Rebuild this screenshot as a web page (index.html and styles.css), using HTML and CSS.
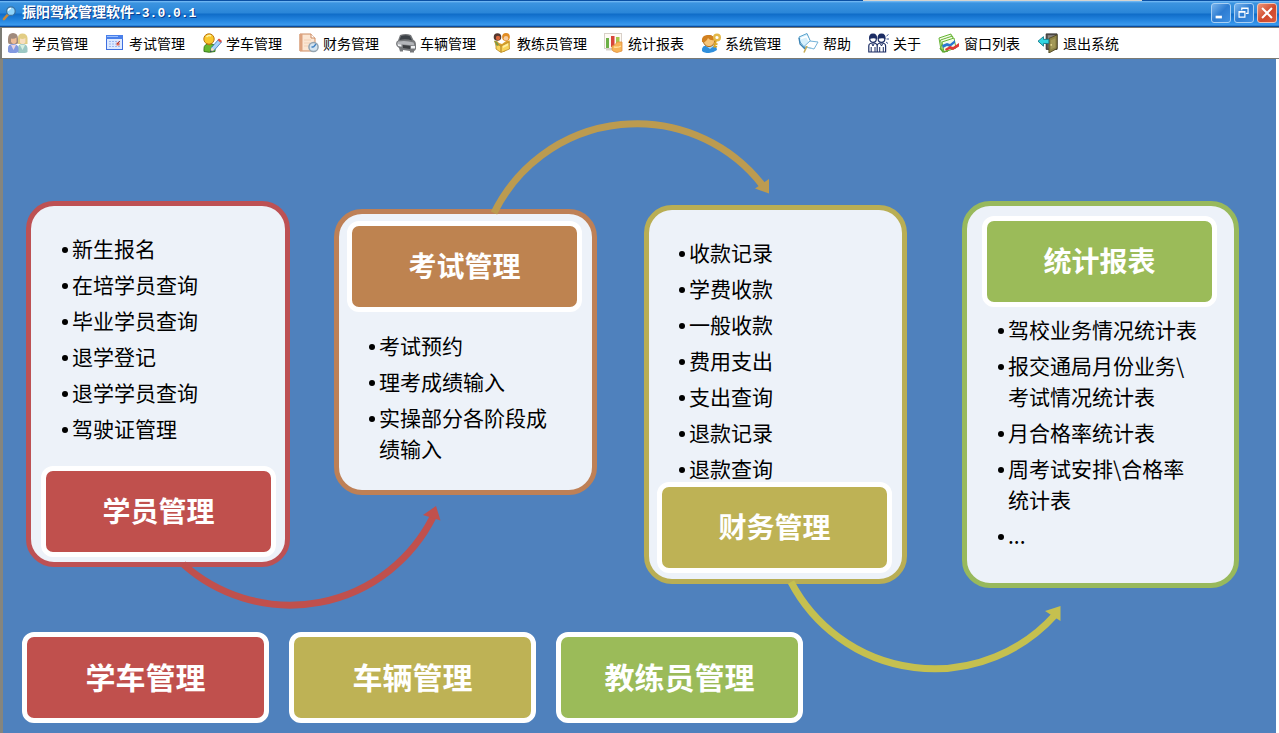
FILE: index.html
```html
<!DOCTYPE html>
<html lang="zh-CN">
<head>
<meta charset="utf-8">
<title>振阳驾校管理软件-3.0.0.1</title>
<link rel="stylesheet" href="styles.css">
</head>
<body>
<header class="titlebar">
  <svg class="app-icon" viewBox="0 0 16 16" aria-hidden="true">
    <path d="M2 14.500L7 9" stroke="#c98a3c" stroke-width="2.600" stroke-linecap="round"/>
    <circle cx="9.500" cy="6" r="4.600" fill="#8fd4fa" stroke="#3a6f9e" stroke-width="1.300"/>
    <path d="M6.700 5.500a3 3 0 0 1 3-2.500" stroke="#fff" stroke-width="1.400" fill="none"/>
  </svg>
  <h1 class="title">振阳驾校管理软件<span class="version">-3.0.0.1</span></h1>
  <div class="window-controls">
    <button class="control" aria-label="最小化"><svg viewBox="0 0 20 20"><path d="M4 13h7v3H4z" fill="#fff"/></svg></button>
    <button class="control" aria-label="还原"><svg viewBox="0 0 20 20"><path d="M7.500 7V4.500h7v6H12M7 5h8" fill="none" stroke="#fff" stroke-width="1.300"/><path d="M4.500 8.500h6.500v6H4.500zM4 9h7.500" fill="none" stroke="#fff" stroke-width="1.300"/></svg></button>
    <button class="control control-close" aria-label="关闭"><svg viewBox="0 0 20 20"><path d="M4.500 4.500l11 11M15.500 4.500l-11 11" stroke="#fff" stroke-width="2.200"/></svg></button>
  </div>
</header>

<nav class="menubar">
  <button class="menu-item"><svg class="icon" viewBox="0 0 20 20">
    <path d="M10 20v-5q0-4 4.500-4t5 4v4q-1 1-3 1z" fill="#9cc8c4"/><path d="M12 12l2.500 5 2.500-5z" fill="#d8f0e0"/>
    <path d="M10 5q0-4.500 4.500-4.500T19.500 5v6h-9.500z" fill="#e2cd84"/><path d="M12 5.500q3 1 5.400-.5v4.500q-2.700 3.500-5.400 0z" fill="#f8dfc0"/>
    <path d="M0 19v-4q0-4 5-4t5.500 4v4q-2 1-3 1H2z" fill="#8299e0"/><path d="M3 12l2.500 5L8 12z" fill="#e8d4e0"/>
    <path d="M0 6Q0 0 5 0t5 6v4q0 1-1.500 1h-7Q0 11 0 9z" fill="#a08a7c"/><path d="M3 5.500Q6 6.500 8.500 4.500V9q-2.500 4-5.500 0z" fill="#eebc96"/>
  </svg>学员管理</button>
  <button class="menu-item"><svg class="icon" viewBox="0 0 20 20">
    <rect x="1.500" y="2.500" width="16" height="14" fill="#dce9ff" stroke="#3f6fe0"/><path d="M1 2h17v4H1z" fill="#4a80ea"/><path d="M2 3h11v1H2z" fill="#9cc2ff"/>
    <path d="M4 8.500h11M4 11h11M4 13.500h11" stroke="#9db8f0" stroke-dasharray="2 1"/><path d="M11.500 9.500h3v3h-3z" fill="#e56c58"/><path d="M15 8l-3 3" stroke="#b03c38"/>
  </svg>考试管理</button>
  <button class="menu-item"><svg class="icon" viewBox="0 0 20 20">
    <path d="M2 18.500v-3Q2 11 7 11h3q3 0 3 4v3.500q-6 1.500-11 0z" fill="#65b82e" stroke="#397b1d"/>
    <circle cx="7" cy="6" r="5.200" fill="#f9c72c" stroke="#bd7812"/><path d="M5 11q2 2 5-.5" stroke="#bd7812" fill="none"/><path d="M4.500 4q2-2.500 4.500-1" stroke="#fff4a5" stroke-width="1.500" fill="none"/>
    <path d="M8.500 18.500l1-4 7-8 3 2.500-7 8z" fill="#a8d4fa" stroke="#3471b6" stroke-width=".8"/><path d="M15.500 7l1.500-1.500 3 2.500-1.500 1.800z" fill="#e04d3e"/><path d="M8.500 18.500l1-4 3 2.600z" fill="#fae2b8"/><path d="M8 19l.8-1.800 1.200 1z" fill="#222"/>
  </svg>学车管理</button>
  <button class="menu-item"><svg class="icon" viewBox="0 0 20 20">
    <path d="M1 1h11l4 4v13H1z" fill="#fbe6d3" stroke="#cd8b60"/><path d="M.500 1h3v17h-3z" fill="#dda27e"/><path d="M12 1v4h4" fill="#fff" stroke="#cd8b60"/><path d="M5 7h7M5 10h6M5 13h4" stroke="#f0cfb4"/>
    <circle cx="14.500" cy="14" r="4.600" fill="#d4e4f0" stroke="#94a4b0" stroke-width="1.500"/><path d="M14.500 14l2.500-3M14.500 14h-2" stroke="#3f81c2" stroke-width="1.300"/>
  </svg>财务管理</button>
  <button class="menu-item"><svg class="icon" viewBox="0 0 20 20">
    <path d="M2 7.500L4 2q6-2 11 0l2.500 5q2.500 1 2.500 5v4q-1 2-2 2v1.500h-4V18l-7-1v1.500H4L3 15q-3-2-3-4 0-3 2-3.500z" fill="#75777a"/>
    <path d="M5 3q5-1.500 9 .2L16 7.500Q10 5.500 3.500 7z" fill="#3c4147"/><path d="M2 8.500q8-1.500 15.500 1l1 3L1 11z" fill="#b4b6ba"/><path d="M7 12l7 1v3l-7-1z" fill="#3c3e41"/><path d="M1.500 11l4 .5v2.300l-3.500-.8zM15 13h4v2.500h-4z" fill="#eef0f2"/>
  </svg>车辆管理</button>
  <button class="menu-item"><svg class="icon" viewBox="0 0 20 20">
    <circle cx="4.500" cy="4" r="3.800" fill="#54382f"/><circle cx="5" cy="5" r="2.200" fill="#d9653a"/><circle cx="13" cy="4" r="3.900" fill="#e28d23"/><circle cx="13" cy="5.200" r="2.300" fill="#f6cda0"/>
    <path d="M1 8q3-1 5 2l3 1 4-3 4-.5-1 7-5 4.500-7-3z" fill="#dca22c"/><path d="M3 11l5 2 8-4 .5 7L8 19.500 3 16z" fill="#f9d45a" stroke="#b98822" stroke-width=".8"/><path d="M8 13v6" stroke="#a9761c"/><path d="M10 13l5-2.500v2L10 15z" fill="#fff0a4"/><path d="M1 7.500l3 1.500 2 3-2 1z" fill="#7a9a4a"/>
  </svg>教练员管理</button>
  <button class="menu-item"><svg class="icon" viewBox="0 0 20 20">
    <rect x=".5" y=".5" width="17" height="15" fill="#fffaf4" stroke="#d8d0c8"/><path d="M2 5h3v10H2z" fill="#6db047"/><path d="M7 3h3.500v11H7z" fill="#d8453a"/><path d="M12 4h3.500v8H12z" fill="#a5c84c"/><path d="M2 15.500h11v2H2z" fill="#d9d3cb"/>
    <path d="M8 13q4-1 5-4h5v9l-5 1.500q-5-1-5-3z" fill="#f7b456" stroke="#e09040" stroke-width=".8"/><path d="M10 14q4 1 7-1" stroke="#ffe09c" stroke-width="1.500" fill="none"/>
  </svg>统计报表</button>
  <button class="menu-item"><svg class="icon" viewBox="0 0 20 20">
    <path d="M1 18q-1-6 7-6t8 5q-4 3-8 3-5 0-7-2z" fill="#2f8fdc"/><path d="M5 13l4 3 4-3" fill="#a9dbff"/>
    <circle cx="8" cy="8" r="5.600" fill="#f7c67a" stroke="#b26e20"/><path d="M1 9q-1-7 6-7 6 0 7 5-5 1-7-2-2 5-6 4z" fill="#d2801f"/>
    <circle cx="16" cy="4.500" r="2.800" fill="none" stroke="#e4b848" stroke-width="2.400"/><path d="M15 7.500l-2 7M13.500 13l2.500 1M14 10.500l2.500.8" stroke="#d9a521" stroke-width="1.800"/>
  </svg>系统管理</button>
  <button class="menu-item"><svg class="icon icon-mid" viewBox="0 0 21 20">
    <path d="M1 4l8-3.500 3.500 8L12 13l-5 2-5-6z" fill="#d7f0fc" stroke="#58a0cb"/><path d="M3 5.500l5.500-2L11 8" fill="none" stroke="#fff" stroke-width="1.500"/>
    <path d="M6 13.500l6-5.500 8 1-4 7z" fill="#fff" stroke="#75b2d8"/><path d="M1 5l1 6 5 5" stroke="#3c84b5" stroke-width="1.300" fill="none"/><path d="M9 13l-3 6.500" stroke="#c8ac54" stroke-width="1.600"/><path d="M9.500 14.500l5 1" stroke="#9ac9e3"/>
  </svg>帮助</button>
  <button class="menu-item"><svg class="icon icon-mid" viewBox="0 0 21 20">
    <g fill="#fff" stroke="#1c2d64" stroke-width="1.200"><path d="M.800 19v-6q0-3 4.200-3t4.200 3v6zM9.200 19v-6q0-3 4.200-3t4.200 3v6z"/><circle cx="5" cy="6" r="3.300"/><circle cx="13.500" cy="6" r="3.300"/></g>
    <path d="M1.200 6Q.500.500 5 .500T9 6Q6 4.500 1.200 6zM9.700 6Q9 .500 13.500.500t4 5.500q-3-1.500-7.800 0z" fill="#1c2d64"/><path d="M3.200 14v5M7 14v5M11.700 14v5M15.300 14v5M4 11l1 2 1-2M12.500 11l1 2 1-2" stroke="#1c2d64" fill="none"/><path d="M18.500 3l2-1.500M18.500 6H21M18 9l2 1.500" stroke="#38508e"/>
  </svg>关于</button>
  <button class="menu-item"><svg class="icon icon-wide" viewBox="0 0 22 20">
    <g stroke="#68b535" fill="#f2fbe8"><path d="M1 5l12-4 2 10-12 6z"/><path d="M2.500 7l12-4 2 10-12 5z"/><path d="M4 9l12-4 2 10-12 4z"/></g>
    <path d="M4 12l5-2 3 1 5-4v3l-5 4-3-1-4 2z" fill="#2a76d0"/><path d="M7 16l5-3 3 1 6-4v3.500L15 17l-3-1-4 2z" fill="#df3835"/><path d="M2 15l3 4 5-1" stroke="#60a833" stroke-width="1.500" fill="none"/>
  </svg>窗口列表</button>
  <button class="menu-item"><svg class="icon icon-wide" viewBox="0 0 22 22">
    <path d="M9 1h12v17H9z" fill="#5b5653" stroke="#302d2b"/><path d="M11 2.500h8V17h-8z" fill="#8a8684"/><path d="M12 6l9-4v15l-9 5z" fill="#8e8447" stroke="#4f4822"/><path d="M14 8l5-2.300v10L14 18z" fill="#a39958"/><path d="M14.500 12v2" stroke="#f8eaa0" stroke-width="1.300"/>
    <path d="M0 9l6-5v3h6v4.500H6v3z" fill="#32d7e3" stroke="#14788a"/>
  </svg>退出系统</button>
</nav>

<main class="workspace">
  <section class="flow">
    <article class="card card-student">
      <ul class="links">
        <li><a href="#">新生报名</a></li>
        <li><a href="#">在培学员查询</a></li>
        <li><a href="#">毕业学员查询</a></li>
        <li><a href="#">退学登记</a></li>
        <li><a href="#">退学学员查询</a></li>
        <li><a href="#">驾驶证管理</a></li>
      </ul>
      <button class="tile red">学员管理</button>
    </article>

    <article class="card card-exam">
      <button class="tile orange">考试管理</button>
      <ul class="links">
        <li><a href="#">考试预约</a></li>
        <li><a href="#">理考成绩输入</a></li>
        <li><a href="#">实操部分各阶段成绩输入</a></li>
      </ul>
    </article>

    <article class="card card-finance">
      <ul class="links">
        <li><a href="#">收款记录</a></li>
        <li><a href="#">学费收款</a></li>
        <li><a href="#">一般收款</a></li>
        <li><a href="#">费用支出</a></li>
        <li><a href="#">支出查询</a></li>
        <li><a href="#">退款记录</a></li>
        <li><a href="#">退款查询</a></li>
      </ul>
      <button class="tile olive">财务管理</button>
    </article>

    <article class="card card-report">
      <button class="tile green">统计报表</button>
      <ul class="links">
        <li><a href="#">驾校业务情况统计表</a></li>
        <li><a href="#">报交通局月份业务\<br>考试情况统计表</a></li>
        <li><a href="#">月合格率统计表</a></li>
        <li><a href="#">周考试安排\合格率<br>统计表</a></li>
        <li><a href="#">...</a></li>
      </ul>
    </article>

    <svg class="arrows" width="1273" height="674" viewBox="3 59 1273 674" fill="none" stroke-width="7" aria-hidden="true">
      <path d="M183 564A160 160 0 0 0 433 517" stroke="#c0504d"/>
      <path d="M436 506l4.500 14.500L423 515z" fill="#c0504d"/>
      <path d="M494 213A159 159 0 0 1 763 186" stroke="#bc9b50"/>
      <path d="M769 193.500V179l-14 9.500z" fill="#bc9b50"/>
      <path d="M791 582A162 162 0 0 0 1055 615" stroke="#c5c04f"/>
      <path d="M1060.500 606v15L1045 611z" fill="#c5c04f"/>
    </svg>
  </section>

  <section class="shortcuts">
    <button class="tile shortcut red">学车管理</button>
    <button class="tile shortcut olive">车辆管理</button>
    <button class="tile shortcut green">教练员管理</button>
  </section>
</main>
</body>
</html>
```
FILE: styles.css
```css
* {
  box-sizing: border-box;
}

body {
  margin: 0;
  height: 100vh;
  display: flex;
  flex-direction: column;
  overflow: hidden;
  background: #fff;
  font-family: "Noto Sans CJK SC", sans-serif;
}

button {
  font-family: inherit;
  border: 0;
  padding: 0;
  background: none;
  cursor: pointer;
}

/* Title bar */
.titlebar {
  position: relative;
  flex: none;
  display: flex;
  align-items: center;
  height: 27px;
  padding: 0 2px 2px;
  border-top: 1px solid #0a50a4;
  border-bottom: 1px solid #0a4a9c;
  background: linear-gradient(#7cc0f8 0, #3b94e0 2px, #2a86d8 12px, #0f6cc8 13px, #2384de 19px, #3a9aee 24px, #1b6cc0 25px);
}

.titlebar::after {
  content: "";
  position: absolute;
  top: -1px;
  right: 137px;
  width: 279px;
  height: 1px;
  background: #d4d4d0;
}

.app-icon {
  width: 15px;
  height: 16px;
  margin-right: 5px;
}

.title {
  flex: 1;
  margin: 0;
  color: #fff;
  font-size: 14px;
  font-weight: 700;
  line-height: 20px;
  text-shadow: 1px 1px 0 #0a3c8c;
}

.version {
  font-family: "Liberation Mono", monospace;
  font-size: 13px;
}

.window-controls {
  display: flex;
  gap: 3px;
}

.control {
  width: 20px;
  height: 20px;
  border: 1px solid #a9d0f4;
  border-radius: 3px;
  background: linear-gradient(135deg, #79b4ec, #2d7cd2 50%, #3f90e2);
}

.control svg {
  display: block;
  width: 18px;
  height: 18px;
}

.control-close {
  border-color: #f2c5b8;
  background: linear-gradient(135deg, #ec9478, #d0492b 55%, #d9593c);
}

/* Menu bar */
.menubar {
  flex: none;
  display: flex;
  align-items: center;
  gap: 17px;
  height: 32px;
  padding: 0 0 1px 6px;
  border: solid #7b7b74;
  border-width: 1px 0 1px 2px;
  background: #fff;
}

.menu-item {
  display: flex;
  align-items: center;
  gap: 4px;
  color: #000;
  font-size: 14px;
  line-height: 20px;
  white-space: nowrap;
}

.icon {
  flex: none;
  width: 20px;
  height: 20px;
}

.icon-mid {
  width: 21px;
}

.icon-wide {
  width: 22px;
}

/* Workspace */
.workspace {
  flex: 1;
  margin-right: 3px;
  border-left: 3px solid #85857e;
  background: #4f81bd;
}

.flow {
  position: relative;
  height: 573px;
}

.card {
  position: absolute;
  display: flex;
  flex-direction: column;
  width: 263px;
  border: 5px solid;
  border-radius: 28px;
  background: #edf2f9;
}

.card-student {
  left: 23px;
  top: 142px;
  width: 264px;
  padding: 27px 9px 5px 10px;
  border-color: #bd5154;
  gap: 22px;
}

.card-exam {
  left: 331px;
  top: 150px;
  padding: 7px 10px 26px 8px;
  border-color: #be8056;
  gap: 18px;
}

.card-finance {
  left: 641px;
  top: 146px;
  padding: 27px 10px 6px 8px;
  border-color: #b9ae54;
}

.card-finance .tile {
  margin-top: -2px;
}

.card-report {
  left: 959px;
  top: 142px;
  width: 277px;
  padding: 10px 17px 32px 15px;
  border-color: #98b95c;
  gap: 7px;
}

.links {
  display: flex;
  flex-direction: column;
  gap: 5px;
  margin: 0;
  padding: 0 16px 0 22px;
  list-style: none;
  font-size: 21px;
  line-height: 31px;
}

.card-student .links {
  padding-left: 21px;
}

.card-report .links {
  padding: 0 0 0 16px;
}

.links li {
  display: flex;
  gap: 4px;
}

.links li::before {
  content: "";
  flex: none;
  width: 6px;
  height: 6px;
  margin-top: 14px;
  border-radius: 50%;
  background: #000;
}

.links a {
  color: #000;
  text-decoration: none;
}

.tile {
  height: 91px;
  padding-bottom: 3px;
  border: 5px solid #fff;
  border-radius: 12px;
  color: #fff;
  font-size: 28px;
  font-weight: 700;
  line-height: 40px;
}

.red {
  background: #c0504d;
}

.orange {
  background: #be8350;
}

.olive {
  background: #beb255;
}

.green {
  background: #9bbb59;
}

.arrows {
  position: absolute;
  left: 0;
  top: 0;
  pointer-events: none;
}

.shortcuts {
  display: flex;
  gap: 20px;
  padding-left: 19px;
}

.shortcut {
  width: 247px;
  font-size: 30px;
}
```
